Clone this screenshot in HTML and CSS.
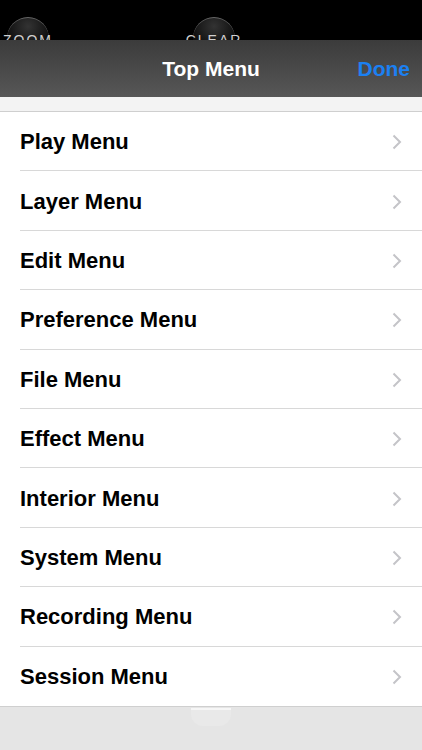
FILE: index.html
```html
<!DOCTYPE html>
<html>
<head>
    <title>Top Menu</title>
    <link rel="stylesheet" href="styles.css">
</head>
<body>

    <div class="toolbar">
        <div class="round-btn zoom-btn"><span class="dome"></span><span class="caption">ZOOM</span></div>
        <div class="round-btn clear-btn"><span class="dome"></span><span class="caption">CLEAR</span></div>
    </div>

    <div class="navbar">
        <div class="nav-title">Top Menu</div>
        <div class="nav-done">Done</div>
    </div>

    <div class="gap-strip"></div>

    <ul class="menu-list">
        <li class="menu-row"><span>Play Menu</span><svg class="chevron" viewBox="0 0 10 16"><path d="M1.5 1.5 L8 8 L1.5 14.5"/></svg></li>
        <li class="menu-row"><span>Layer Menu</span><svg class="chevron" viewBox="0 0 10 16"><path d="M1.5 1.5 L8 8 L1.5 14.5"/></svg></li>
        <li class="menu-row"><span>Edit Menu</span><svg class="chevron" viewBox="0 0 10 16"><path d="M1.5 1.5 L8 8 L1.5 14.5"/></svg></li>
        <li class="menu-row"><span>Preference Menu</span><svg class="chevron" viewBox="0 0 10 16"><path d="M1.5 1.5 L8 8 L1.5 14.5"/></svg></li>
        <li class="menu-row"><span>File Menu</span><svg class="chevron" viewBox="0 0 10 16"><path d="M1.5 1.5 L8 8 L1.5 14.5"/></svg></li>
        <li class="menu-row"><span>Effect Menu</span><svg class="chevron" viewBox="0 0 10 16"><path d="M1.5 1.5 L8 8 L1.5 14.5"/></svg></li>
        <li class="menu-row"><span>Interior Menu</span><svg class="chevron" viewBox="0 0 10 16"><path d="M1.5 1.5 L8 8 L1.5 14.5"/></svg></li>
        <li class="menu-row"><span>System Menu</span><svg class="chevron" viewBox="0 0 10 16"><path d="M1.5 1.5 L8 8 L1.5 14.5"/></svg></li>
        <li class="menu-row"><span>Recording Menu</span><svg class="chevron" viewBox="0 0 10 16"><path d="M1.5 1.5 L8 8 L1.5 14.5"/></svg></li>
        <li class="menu-row"><span>Session Menu</span><svg class="chevron" viewBox="0 0 10 16"><path d="M1.5 1.5 L8 8 L1.5 14.5"/></svg></li>
    </ul>

    <div class="bottom-area">
        <span class="bottom-glow"></span>
    </div>

</body>
</html>
```

FILE: styles.css
```css
body {
    margin: 0;
    font-family: "Liberation Sans", Arial, sans-serif;
    background: #e5e5e5;
    width: 422px;
    height: 750px;
    overflow: hidden;
}

/* black strip with the half-hidden round buttons */
.toolbar {
    height: 40px;
    background: #000;
    display: flex;
    align-items: flex-start;
    overflow: hidden;
    padding-left: 3px;
    gap: 133px;
}
.round-btn {
    width: 50px;
    padding-top: 17px;
    display: flex;
    flex-direction: column;
    align-items: center;
    flex-shrink: 0;
}
.clear-btn {
    width: 56px;
}
.dome {
    flex-shrink: 0;
    width: 42px;
    height: 42px;
    border-radius: 50%;
    border-top: 1px solid #666;
    background: radial-gradient(circle at 50% 20%, #333, #0c0c0c 60%);
}
.caption {
    margin-top: -28px;
    color: #cfcfcf;
    font-size: 14px;
    line-height: 16px;
    letter-spacing: 2px;
}

.navbar {
    height: 57px;
    background: linear-gradient(#3b3b3b, #575757);
    display: flex;
    align-items: center;
    justify-content: center;
    position: relative;
}
.nav-title {
    color: #fff;
    font-size: 21px;
    font-weight: bold;
}
.nav-done {
    position: absolute;
    right: 12px;
    top: 17px;
    color: #1b80f2;
    font-size: 21px;
    font-weight: bold;
}

.gap-strip {
    height: 14px;
    background: #f3f3f3;
    border-bottom: 1px solid #cfcfcf;
}

.menu-list {
    list-style: none;
    margin: 0;
    padding: 0 0 0 20px;
    background: #fff;
    border-bottom: 1px solid #cfcfcf;
}
.menu-row {
    height: 59.4px;
    box-sizing: border-box;
    display: flex;
    align-items: center;
    justify-content: space-between;
    padding: 2px 20px 0 0;
    border-bottom: 1px solid #d8d8d8;
    font-size: 22px;
    font-weight: bold;
    color: #000;
}
.menu-row:last-child {
    border-bottom: none;
}
.chevron {
    width: 10px;
    height: 16px;
    fill: none;
    stroke: #c4c4c8;
    stroke-width: 2;
}

.bottom-area {
    height: 44px;
    display: flex;
    justify-content: center;
}
.bottom-glow {
    width: 40px;
    height: 16px;
    margin-top: 1px;
    border-radius: 0 0 12px 12px;
    background: #e9e9e9;
    border-top: 2px solid #f6f6f6;
}
```
